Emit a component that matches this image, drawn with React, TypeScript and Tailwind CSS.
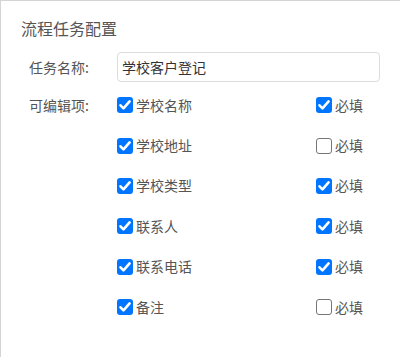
import React from 'react'

interface FieldItem {
  name: string
  editable: boolean
  required: boolean
}

const fields: FieldItem[] = [
  { name: '学校名称', editable: true, required: true },
  { name: '学校地址', editable: true, required: false },
  { name: '学校类型', editable: true, required: true },
  { name: '联系人', editable: true, required: true },
  { name: '联系电话', editable: true, required: true },
  { name: '备注', editable: true, required: false },
]

function Check({ checked, label }: { checked: boolean; label: string }) {
  return (
    <label className="flex items-center gap-[3px] text-[14px] text-[#555]">
      {checked ? (
        <span className="w-4 h-4 rounded-[3px] bg-[#0075ff] flex items-center justify-center">
          <svg viewBox="0 0 16 16" className="w-4 h-4">
            <path d="M3.5 8.3 L6.5 11.4 L12.6 4.4" fill="none" stroke="#fff" strokeWidth="2.6" strokeLinecap="round" strokeLinejoin="round" />
          </svg>
        </span>
      ) : (
        <span className="w-4 h-4 rounded-[3px] border border-[#767676] bg-white" />
      )}
      <span>{label}</span>
    </label>
  )
}

export default function App() {
  return (
    <div
      className="w-[400px] h-[357px] bg-white border-l border-t border-[#d4d4d4] overflow-hidden"
      style={{ fontFamily: '"Microsoft YaHei", "Noto Sans CJK SC", sans-serif' }}
    >
      <h2 className="pl-[20px] pt-[15px] text-[16px] leading-6 text-[#555] font-normal">流程任务配置</h2>

      <div className="mt-[12px] pl-[28px] flex items-center">
        <span className="w-[88px] text-[14px] text-[#555]">任务名称:</span>
        <div className="w-[263px] h-[30px] border border-[#dcdcdc] rounded-[4px] flex items-center px-[4px] text-[14px] text-[#333]">
          学校客户登记
        </div>
      </div>

      <div className="mt-[3px] pl-[28px] flex">
        <span className="w-[88px] h-10 flex items-center text-[14px] text-[#555]">可编辑项:</span>
        <div className="flex flex-col">
          {fields.map((f) => (
            <div key={f.name} className="h-[40.4px] flex items-center">
              <div className="w-[199px]">
                <Check checked={f.editable} label={f.name} />
              </div>
              <Check checked={f.required} label="必填" />
            </div>
          ))}
        </div>
      </div>
    </div>
  )
}
